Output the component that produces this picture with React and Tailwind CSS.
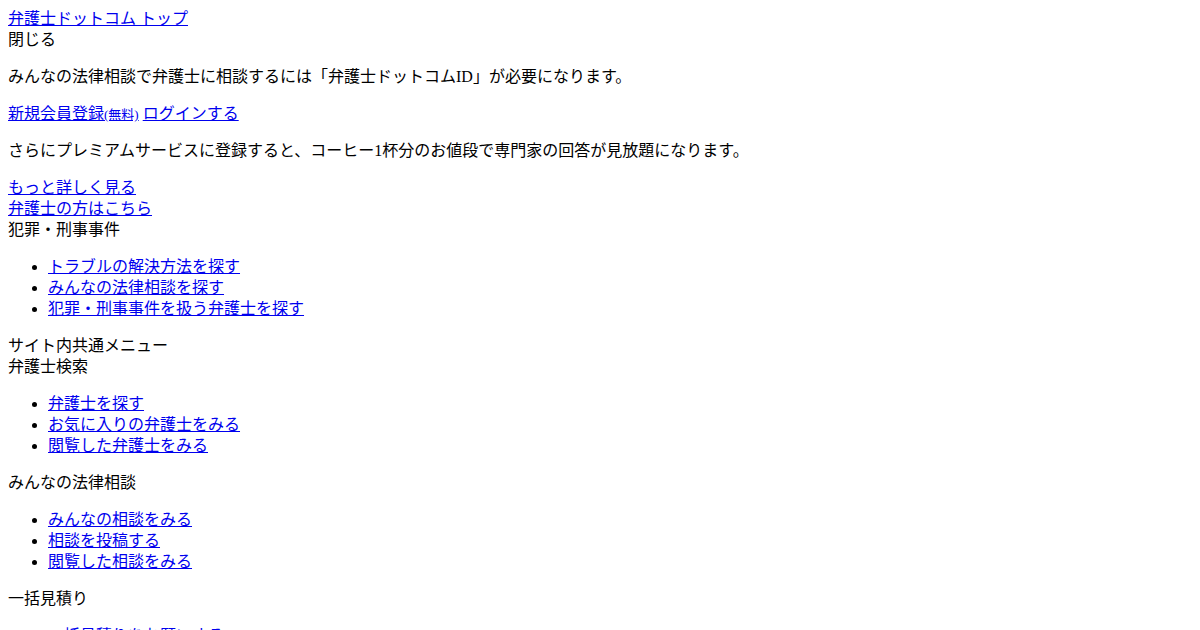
const lnk = 'text-[#0000ee] underline'

const sections = [
  {
    title: '弁護士検索',
    items: ['弁護士を探す', 'お気に入りの弁護士をみる', '閲覧した弁護士をみる'],
  },
  {
    title: 'みんなの法律相談',
    items: ['みんなの相談をみる', '相談を投稿する', '閲覧した相談をみる'],
  },
  {
    title: '一括見積り',
    items: ['一括見積りをお願いする', '見積りの履歴をみる'],
  },
]

function LinkList({ items }) {
  return (
    <ul className="my-4 list-disc pl-10">
      {items.map(t => (
        <li key={t}>
          <a href="#" className={lnk}>{t}</a>
        </li>
      ))}
    </ul>
  )
}

export default function App() {
  return (
    <div
      className="min-h-screen bg-white p-2 text-base leading-[21px] text-black"
      style={{ fontFamily: '"Liberation Serif", "Noto Sans CJK JP", serif' }}
    >
      <div><a href="#" className={lnk}>弁護士ドットコム トップ</a></div>
      <div>閉じる</div>
      <p className="my-4">みんなの法律相談で弁護士に相談するには「弁護士ドットコムID」が必要になります。</p>
      <p className="my-4">
        <a href="#" className={lnk}>新規会員登録<small className="text-[13px] leading-none">(無料)</small></a>{' '}
        <a href="#" className={lnk}>ログインする</a>
      </p>
      <p className="my-4">さらにプレミアムサービスに登録すると、コーヒー1杯分のお値段で専門家の回答が見放題になります。</p>
      <div><a href="#" className={lnk}>もっと詳しく見る</a></div>
      <div><a href="#" className={lnk}>弁護士の方はこちら</a></div>
      <div>犯罪・刑事事件</div>
      <LinkList items={['トラブルの解決方法を探す', 'みんなの法律相談を探す', '犯罪・刑事事件を扱う弁護士を探す']} />
      <div>サイト内共通メニュー</div>
      {sections.map(s => (
        <div key={s.title}>
          <div>{s.title}</div>
          <LinkList items={s.items} />
        </div>
      ))}
    </div>
  )
}
